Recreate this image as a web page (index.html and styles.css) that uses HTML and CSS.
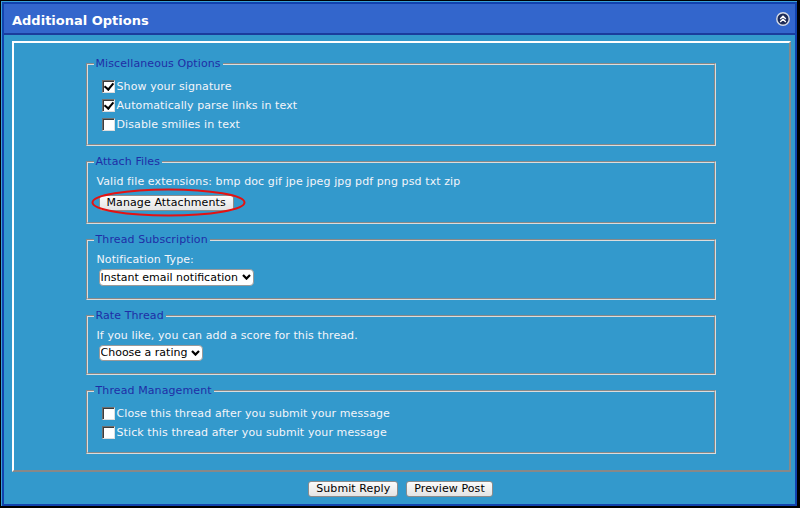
FILE: index.html
```html
<!DOCTYPE html>
<html>
<head>
<meta charset="utf-8">
<link rel="stylesheet" href="styles.css">
</head>
<body>
<div class="window">
  <div class="inner">
    <div class="header">
      <span class="title">Additional Options</span>
      <svg class="collapse" width="14" height="14" viewBox="0 0 14 14">
        <circle cx="7" cy="7" r="6.2" fill="#1d2b57" stroke="#d6dbe6" stroke-width="1.4"/>
        <path d="M4.2 7 L7 4.2 L9.8 7 M4.2 10 L7 7.2 L9.8 10" fill="none" stroke="#fff" stroke-width="1.4"/>
      </svg>
    </div>
    <div class="body">
      <div class="panel">
        <fieldset class="fs fs-misc">
          <legend>Miscellaneous Options</legend>
          <label class="cb"><input type="checkbox" checked>Show your signature</label>
          <label class="cb"><input type="checkbox" checked>Automatically parse links in text</label>
          <label class="cb"><input type="checkbox">Disable smilies in text</label>
        </fieldset>
        <fieldset class="fs fs-attach">
          <legend>Attach Files</legend>
          <div class="line">Valid file extensions: bmp doc gif jpe jpeg jpg pdf png psd txt zip</div>
          <div class="btnrow">
            <span class="mark">
              <button class="btn" type="button">Manage Attachments</button>
              <svg class="ellipse" width="155" height="29" viewBox="0 0 155 29"><ellipse cx="77.5" cy="14.5" rx="76" ry="13" fill="none" stroke="#e31212" stroke-width="2"/></svg>
            </span>
          </div>
        </fieldset>
        <fieldset class="fs fs-sub">
          <legend>Thread Subscription</legend>
          <div class="line">Notification Type:</div>
          <div class="selrow">
            <span class="sel">
              <select class="select select-tall"><option>Instant email notification</option></select>
              <svg class="chev" width="9" height="6" viewBox="0 0 9 6"><path d="M1 1 L4.5 4.6 L8 1" fill="none" stroke="#000" stroke-width="2.2"/></svg>
            </span>
          </div>
        </fieldset>
        <fieldset class="fs fs-rate">
          <legend>Rate Thread</legend>
          <div class="line">If you like, you can add a score for this thread.</div>
          <div class="selrow">
            <span class="sel">
              <select class="select"><option>Choose a rating</option></select>
              <svg class="chev" width="9" height="6" viewBox="0 0 9 6"><path d="M1 1 L4.5 4.6 L8 1" fill="none" stroke="#000" stroke-width="2.2"/></svg>
            </span>
          </div>
        </fieldset>
        <fieldset class="fs fs-mgmt">
          <legend>Thread Management</legend>
          <label class="cb"><input type="checkbox">Close this thread after you submit your message</label>
          <label class="cb"><input type="checkbox">Stick this thread after you submit your message</label>
        </fieldset>
      </div>
      <div class="actions">
        <button class="btn" type="button">Submit Reply</button>
        <button class="btn" type="button">Preview Post</button>
      </div>
    </div>
  </div>
</div>
</body>
</html>
```

FILE: styles.css
```css
* { box-sizing: border-box; }

html, body {
  margin: 0;
}

body {
  padding: 1px 3px 2px 1px;
  background: #000;
  font-family: "DejaVu Sans", Verdana, sans-serif;
  font-size: 11px;
  width: 800px;
  height: 508px;
  overflow: hidden;
}

.window {
  border-top: 1px solid #3a9fd6;
  border-left: 1px solid #3a9fd6;
  height: 505px;
}

.inner {
  border: 2px solid #1142ad;
  height: 504px;
  background: #3399cc;
  display: flex;
  flex-direction: column;
}

.header {
  height: 31px;
  flex: none;
  background: #3366cc;
  border-bottom: 2px solid #1a3c9c;
  display: flex;
  align-items: center;
  justify-content: space-between;
  padding: 0 5px 0 8px;
}

.title {
  color: #fff;
  font-weight: bold;
  font-size: 13px;
  padding-top: 3px;
}

.collapse {
  display: block;
  margin-top: 1px;
}

.body {
  flex: 1;
  display: flex;
  flex-direction: column;
}

.panel {
  margin: 6px 4px 0 8px;
  border: 2px solid;
  border-color: #fff #888 #888 #fff;
  padding: 14px 0 16px;
  display: flex;
  flex-direction: column;
  align-items: center;
  gap: 9px;
}

.fs {
  width: 630px;
  margin: 0 0 0 -2px;
  border: 2px groove #dcdcdc;
  padding: 6px 10px 10px 9px;
  color: #f3f5fa;
  letter-spacing: 0.1px;
}

.fs legend {
  color: #1f2ea6;
  font-size: 11px;
  line-height: 14px;
  padding: 0 2px;
  margin-left: -3px;
}

.fs-attach { padding-bottom: 11px; }
.fs-sub { padding-bottom: 12px; }
.fs-rate { padding-bottom: 12px; }
.fs-mgmt { padding-bottom: 10px; }

.line {
  line-height: 14px;
  height: 14px;
  white-space: nowrap;
}

.cb {
  display: flex;
  align-items: center;
  height: 19px;
  white-space: nowrap;
}

.cb input {
  appearance: none;
  -webkit-appearance: none;
  width: 13px;
  height: 13px;
  margin: 0 2px 0 5px;
  background: #fff;
  border: 1px solid;
  border-color: #6e6e6e #dedede #dedede #6e6e6e;
  box-shadow: inset 1px 1px 0 #3c3c3c;
  border-radius: 0;
  position: relative;
  flex: none;
}

.cb input:checked::after {
  content: "";
  position: absolute;
  left: 3px;
  top: 0;
  width: 4px;
  height: 7px;
  border: solid #000;
  border-width: 0 2px 2px 0;
  transform: rotate(40deg);
}

.btnrow {
  margin-top: 6px;
  padding-left: 2px;
  display: flex;
}

.mark {
  position: relative;
  display: inline-flex;
}

.ellipse {
  position: absolute;
  left: -8px;
  top: -7px;
  pointer-events: none;
}

.btn {
  height: 16px;
  padding: 0 7px;
  margin: 0;
  border: 1px solid #8c8c8c;
  border-radius: 3px;
  background: linear-gradient(#fbfbfb, #e4e4e4);
  color: #000;
  font-family: "DejaVu Sans", Verdana, sans-serif;
  font-size: 11px;
  line-height: 14px;
  letter-spacing: 0.1px;
  white-space: nowrap;
}

.selrow {
  margin-top: 2px;
  padding-left: 2px;
  display: flex;
}

.sel {
  position: relative;
  display: inline-flex;
}

.select {
  appearance: none;
  -webkit-appearance: none;
  height: 16px;
  margin: 0;
  padding: 0 14px 0 1px;
  border: 1px solid #9a9a9a;
  border-radius: 4px;
  background: #fff;
  color: #000;
  font-family: "DejaVu Sans", Verdana, sans-serif;
  font-size: 11px;
  line-height: 14px;
}

.select-tall { height: 17px; }

.chev {
  position: absolute;
  right: 3px;
  top: 5px;
  pointer-events: none;
}

.actions {
  display: flex;
  justify-content: center;
  gap: 8px;
  padding-top: 9px;
  padding-left: 2px;
}
```
